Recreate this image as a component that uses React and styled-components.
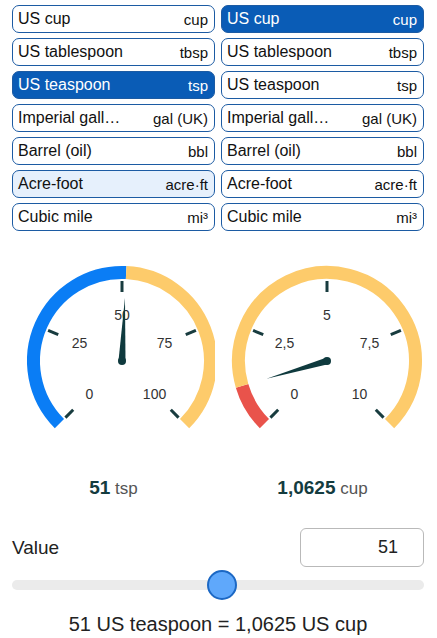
import React from "react";
import styled, { createGlobalStyle } from "styled-components";

const Global = createGlobalStyle`
  html, body { margin: 0; padding: 0; background: #fff; }
  body { font-family: "Liberation Sans", Arial, sans-serif; color: #111; }
`;

const Page = styled.div`
  width: 437px;
  padding: 5px 13px 0 12px;
  box-sizing: border-box;
`;

const Columns = styled.div`
  display: grid;
  grid-template-columns: 203px 203px;
  column-gap: 6px;
`;

const List = styled.div`
  display: flex;
  flex-direction: column;
  gap: 5px;
`;

const UnitButton = styled.div`
  height: 28px;
  box-sizing: border-box;
  display: flex;
  align-items: center;
  justify-content: space-between;
  padding: 0 6px 0 5px;
  border: 1px solid #1c5ba3;
  border-radius: 7px;
  background: ${(p) => (p.$selected ? "#0a5cb6" : p.$hover ? "#e6f0fc" : "#fff")};
  color: ${(p) => (p.$selected ? "#fff" : "#111")};
`;

const Label = styled.span`
  font-size: 16px;
  white-space: nowrap;
`;

const Abbr = styled.span`
  font-size: 15px;
  white-space: nowrap;
`;

const GaugeRow = styled.div`
  display: grid;
  grid-template-columns: 203px 203px;
  column-gap: 6px;
  margin-top: 10px;
`;

const GaugeSvg = styled.svg`
  display: block;
  width: 203px;
  height: 200px;
`;

const ValuesRow = styled.div`
  display: grid;
  grid-template-columns: 203px 203px;
  column-gap: 6px;
  margin-top: 36px;
  line-height: 22px;
`;

const Reading = styled.div`
  text-align: center;
  color: #555;
  font-size: 17px;
`;

const Num = styled.b`
  font-size: 19px;
  color: #143c3f;
`;

const ValueRow = styled.div`
  display: flex;
  justify-content: space-between;
  align-items: center;
  margin-top: 28px;
`;

const ValueLabel = styled.span`
  font-size: 19px;
  color: #222;
`;

const ValueInput = styled.div`
  width: 124px;
  height: 39px;
  box-sizing: border-box;
  border: 1px solid #b9b9b9;
  border-radius: 6px;
  display: flex;
  align-items: center;
  justify-content: flex-end;
  padding-right: 25px;
  font-size: 18px;
  color: #222;
`;

const Slider = styled.div`
  position: relative;
  height: 30px;
  margin-top: 3px;
  display: flex;
  align-items: center;
`;

const Track = styled.div`
  width: 100%;
  height: 10px;
  border-radius: 5px;
  background: #ebebeb;
`;

const Thumb = styled.div`
  position: absolute;
  top: 0;
  width: 30px;
  height: 30px;
  box-sizing: border-box;
  border-radius: 50%;
  background: #5fa8fb;
  border: 2px solid #1c68c4;
`;

const Result = styled.div`
  margin-top: 13px;
  text-align: center;
  font-size: 20px;
  line-height: 22px;
  color: #222;
`;

const units = [
  ["US cup", "cup"],
  ["US tablespoon", "tbsp"],
  ["US teaspoon", "tsp"],
  ["Imperial gall…", "gal (UK)"],
  ["Barrel (oil)", "bbl"],
  ["Acre-foot", "acre·ft"],
  ["Cubic mile", "mi³"],
];

const pt = (cx, cy, r, deg) => {
  const a = (deg * Math.PI) / 180;
  return [cx + r * Math.sin(a), cy - r * Math.cos(a)];
};

const arc = (cx, cy, r, a1, a2) => {
  const [x1, y1] = pt(cx, cy, r, a1);
  const [x2, y2] = pt(cx, cy, r, a2);
  const large = a2 - a1 > 180 ? 1 : 0;
  return `M ${x1} ${y1} A ${r} ${r} 0 ${large} 1 ${x2} ${y2}`;
};

function Gauge({ cx, value, max, color, labels }) {
  const cy = 120;
  const R = 88.5;
  const va = -135 + 270 * (value / max);
  const angles = [-135, -67.5, 0, 67.5, 135];
  const [tx, ty] = pt(cx, cy, 63, va);
  const [b1x, b1y] = pt(cx, cy, 3.5, va - 90);
  const [b2x, b2y] = pt(cx, cy, 3.5, va + 90);
  return (
    <GaugeSvg viewBox="0 0 203 200">
      <path d={arc(cx, cy, R, -135, va)} fill="none" stroke={color} strokeWidth="13" />
      <path d={arc(cx, cy, R, va, 135)} fill="none" stroke="#fdcb6b" strokeWidth="13" />
      {angles.map((a, i) => {
        const [x1, y1] = pt(cx, cy, 69, a);
        const [x2, y2] = pt(cx, cy, 80, a);
        const [lx, ly] = pt(cx, cy, 46, a);
        return (
          <g key={i}>
            <line x1={x1} y1={y1} x2={x2} y2={y2} stroke="#183c3f" strokeWidth="3" />
            <text
              x={lx}
              y={ly}
              fontSize="14"
              fill="#333"
              textAnchor="middle"
              dominantBaseline="central"
              fontFamily="'Liberation Sans', Arial, sans-serif"
            >
              {labels[i]}
            </text>
          </g>
        );
      })}
      <polygon points={`${b1x},${b1y} ${tx},${ty} ${b2x},${b2y}`} fill="#0f3a3e" />
      <circle cx={cx} cy={cy} r="4" fill="#0f3a3e" />
    </GaugeSvg>
  );
}

export default function App() {
  const value = 51;
  const pct = value / 100;
  return (
    <Page>
      <Global />
      <Columns>
        <List>
          {units.map(([l, a]) => (
            <UnitButton key={l} $selected={l === "US teaspoon"} $hover={l === "Acre-foot"}>
              <Label>{l}</Label>
              <Abbr>{a}</Abbr>
            </UnitButton>
          ))}
        </List>
        <List>
          {units.map(([l, a]) => (
            <UnitButton key={l} $selected={l === "US cup"}>
              <Label>{l}</Label>
              <Abbr>{a}</Abbr>
            </UnitButton>
          ))}
        </List>
      </Columns>
      <GaugeRow>
        <Gauge cx={110} value={51} max={100} color="#0a7df5" labels={["0", "25", "50", "75", "100"]} />
        <Gauge cx={106} value={1.0625} max={10} color="#e9534b" labels={["0", "2,5", "5", "7,5", "10"]} />
      </GaugeRow>
      <ValuesRow>
        <Reading>
          <Num>51</Num> tsp
        </Reading>
        <Reading>
          <Num>1,0625</Num> cup
        </Reading>
      </ValuesRow>
      <ValueRow>
        <ValueLabel>Value</ValueLabel>
        <ValueInput>51</ValueInput>
      </ValueRow>
      <Slider>
        <Track />
        <Thumb style={{ left: `calc(${pct} * (100% - 30px))` }} />
      </Slider>
      <Result>51 US teaspoon = 1,0625 US cup</Result>
    </Page>
  );
}
